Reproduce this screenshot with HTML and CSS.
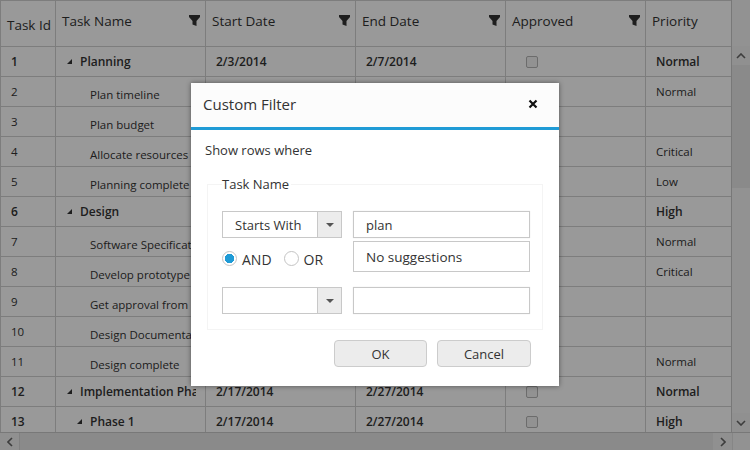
FILE: index.html
```html
<!DOCTYPE html>
<html lang="en">

<head>
    <meta charset="UTF-8">
    <title>Task Grid</title>
    <link rel="stylesheet" href="styles.css">
</head>

<body>
    <section class="grid">
        <div class="grid-main">
            <div class="grid-content">
                <table class="tasks">
                    <colgroup>
                        <col class="col-id">
                        <col class="col-wide">
                        <col class="col-wide">
                        <col class="col-wide">
                        <col class="col-approved">
                        <col class="col-priority">
                    </colgroup>
                    <thead>
                        <tr>
                            <th class="head-id">Task Id</th>
                            <th><div class="head-cell">Task Name<svg class="funnel" viewBox="0 0 11 11"><path d="M0 0H11V2L7.5 6V11L3.5 9.5V6L0 2Z"/></svg></div></th>
                            <th><div class="head-cell">Start Date<svg class="funnel" viewBox="0 0 11 11"><path d="M0 0H11V2L7.5 6V11L3.5 9.5V6L0 2Z"/></svg></div></th>
                            <th><div class="head-cell">End Date<svg class="funnel" viewBox="0 0 11 11"><path d="M0 0H11V2L7.5 6V11L3.5 9.5V6L0 2Z"/></svg></div></th>
                            <th><div class="head-cell">Approved<svg class="funnel" viewBox="0 0 11 11"><path d="M0 0H11V2L7.5 6V11L3.5 9.5V6L0 2Z"/></svg></div></th>
                            <th>Priority</th>
                        </tr>
                    </thead>
                    <tbody>
                        <tr class="parent"><td>1</td><td class="name"><div class="tree"><i class="toggle"></i><span>Planning</span></div></td><td>2/3/2014</td><td>2/7/2014</td><td><span class="check"></span></td><td>Normal</td></tr>
                        <tr><td>2</td><td class="name leaf">Plan timeline</td><td></td><td></td><td></td><td>Normal</td></tr>
                        <tr><td>3</td><td class="name leaf">Plan budget</td><td></td><td></td><td></td><td></td></tr>
                        <tr><td>4</td><td class="name leaf">Allocate resources</td><td></td><td></td><td></td><td>Critical</td></tr>
                        <tr><td>5</td><td class="name leaf">Planning complete</td><td></td><td></td><td></td><td>Low</td></tr>
                        <tr class="parent"><td>6</td><td class="name"><div class="tree"><i class="toggle"></i><span>Design</span></div></td><td></td><td></td><td></td><td>High</td></tr>
                        <tr><td>7</td><td class="name leaf">Software Specification</td><td></td><td></td><td></td><td>Normal</td></tr>
                        <tr><td>8</td><td class="name leaf">Develop prototype</td><td></td><td></td><td></td><td>Critical</td></tr>
                        <tr><td>9</td><td class="name leaf">Get approval from customer</td><td></td><td></td><td></td><td></td></tr>
                        <tr><td>10</td><td class="name leaf">Design Documentation</td><td></td><td></td><td></td><td></td></tr>
                        <tr><td>11</td><td class="name leaf">Design complete</td><td></td><td></td><td></td><td>Normal</td></tr>
                        <tr class="parent"><td>12</td><td class="name"><div class="tree"><i class="toggle"></i><span>Implementation Phase</span></div></td><td>2/17/2014</td><td>2/27/2014</td><td><span class="check"></span></td><td>Normal</td></tr>
                        <tr class="parent"><td>13</td><td class="name sub"><div class="tree"><i class="toggle"></i><span>Phase 1</span></div></td><td>2/17/2014</td><td>2/27/2014</td><td><span class="check"></span></td><td>High</td></tr>
                    </tbody>
                </table>
            </div>
            <div class="vscroll">
                <div class="vscroll-head"></div>
                <div class="sb-btn sb-v"><svg viewBox="0 0 10 6"><path d="M1 5L5 1L9 5"/></svg></div>
                <div class="vscroll-thumb"></div>
                <div class="vscroll-track"></div>
                <div class="sb-btn sb-v"><svg viewBox="0 0 10 6"><path d="M1 1L5 5L9 1"/></svg></div>
            </div>
        </div>
        <div class="hscroll">
            <div class="sb-btn sb-h"><svg viewBox="0 0 6 10"><path d="M5 1L1 5L5 9"/></svg></div>
            <div class="hscroll-thumb"></div>
            <div class="sb-btn sb-h"><svg viewBox="0 0 6 10"><path d="M1 1L5 5L1 9"/></svg></div>
            <div class="sb-corner"></div>
        </div>
    </section>

    <div class="overlay"></div>

    <div class="dialog">
        <div class="dialog-title">
            <span>Custom Filter</span>
            <svg class="close" viewBox="0 0 10 10"><path d="M1.5 1.5L8.5 8.5M8.5 1.5L1.5 8.5"/></svg>
        </div>
        <div class="dialog-body">
            <p class="show-rows">Show rows where</p>
            <fieldset class="filter-box">
                <legend>Task Name</legend>
                <div class="filter-grid">
                    <div class="left-col">
                        <div class="combo">
                            <span class="combo-text">Starts With</span>
                            <span class="combo-btn"><i class="caret"></i></span>
                        </div>
                        <div class="radios">
                            <span class="radio on"></span><span class="radio-label">AND</span>
                            <span class="radio"></span><span class="radio-label">OR</span>
                        </div>
                    </div>
                    <div class="right-col">
                        <div class="field">plan</div>
                        <div class="suggest">No suggestions</div>
                    </div>
                    <div class="combo">
                        <span class="combo-text"></span>
                        <span class="combo-btn"><i class="caret"></i></span>
                    </div>
                    <div class="field"></div>
                </div>
            </fieldset>
            <div class="actions">
                <button class="btn btn-ok">OK</button>
                <button class="btn btn-cancel">Cancel</button>
            </div>
        </div>
    </div>
</body>

</html>
```

FILE: styles.css
```css
* {
    box-sizing: border-box;
    margin: 0;
}

body {
    width: 750px;
    height: 450px;
    overflow: hidden;
    background-color: #fff;
    font-family: "Open Sans", "Liberation Sans", sans-serif;
    color: #333;
}

/* grid */
.grid {
    width: 750px;
    height: 450px;
    display: flex;
    flex-direction: column;
}

.grid-main {
    display: flex;
    height: 432px;
}

.grid-content {
    width: 732px;
    overflow: hidden;
    border-right: 1px solid #c8c8c8;
}

.tasks {
    table-layout: fixed;
    border-collapse: separate;
    border-spacing: 0;
    width: 731px;
    font-size: 11.5px;
}

.col-id {
    width: 56px;
}

.col-wide {
    width: 150px;
}

.col-approved {
    width: 140px;
}

.col-priority {
    width: 85px;
}

.tasks th {
    height: 47px;
    padding: 0 0 6px 6px;
    text-align: left;
    font-size: 13.5px;
    font-weight: 400;
    border-right: 1px solid #d0d0d0;
    border-top: 1px solid #d0d0d0;
    border-bottom: 1px solid #d0d0d0;
    white-space: nowrap;
}

.tasks th:last-child {
    border-right: none;
}

.tasks th.head-id {
    padding: 2px 0 0 6px;
    border-left: 1px solid #d0d0d0;
}

.head-cell {
    display: flex;
    justify-content: space-between;
    align-items: center;
    padding-right: 5px;
}

.funnel {
    width: 11px;
    height: 11px;
    fill: #333;
}

.tasks td {
    height: 30px;
    padding: 0 10px;
    border-right: 1px solid #d0d0d0;
    border-bottom: 1px solid #d0d0d0;
    white-space: nowrap;
    overflow: hidden;
}

.tasks td:first-child {
    border-left: 1px solid #d0d0d0;
}

.tasks td:last-child {
    border-right: none;
}

.parent td {
    font-size: 12px;
    font-weight: 600;
}

.tasks td.name {
    padding-left: 11px;
}

.tasks td.leaf {
    padding-left: 34px;
    padding-top: 5px;
}

.tasks td.sub {
    padding-left: 21px;
}

.tree {
    display: flex;
    align-items: center;
    width: 129px;
    overflow: hidden;
}

.toggle {
    flex: none;
    width: 0;
    height: 0;
    margin: -1px 8px 0 0;
    border-left: 5px solid transparent;
    border-bottom: 5px solid #333;
}

.check {
    display: block;
    width: 12px;
    height: 12px;
    margin-left: 10px;
    background-color: #f4f4f4;
    border: 1px solid #b5b5b5;
    border-radius: 2px;
}

/* scrollbars */
.vscroll {
    width: 18px;
    display: flex;
    flex-direction: column;
    background-color: #f3f3f3;
}

.vscroll-head {
    height: 46px;
}

.vscroll-thumb {
    height: 123px;
    background-color: #e6e6e6;
}

.vscroll-track {
    flex: 1;
}

.hscroll {
    display: flex;
    height: 18px;
    border-top: 1px solid #c8c8c8;
    background-color: #f3f3f3;
}

.hscroll-thumb {
    flex: 1;
    background-color: #e6e6e6;
    border-left: 1px solid #d8d8d8;
}

.sb-corner {
    width: 18px;
    background-color: #f3f3f3;
    border-left: 1px solid #e0e0e0;
}

.sb-btn {
    display: flex;
    align-items: center;
    justify-content: center;
    background-color: #f0f0f0;
}

.sb-v {
    height: 19px;
}

.sb-h {
    width: 19px;
}

.sb-btn svg {
    fill: none;
    stroke: #666;
    stroke-width: 1.6;
}

.sb-v svg {
    width: 10px;
    height: 6px;
}

.sb-h svg {
    width: 6px;
    height: 10px;
}

/* dialog */
.overlay {
    position: absolute;
    top: 0;
    left: 0;
    width: 750px;
    height: 450px;
    background-color: rgba(0, 0, 0, 0.4);
}

.dialog {
    position: absolute;
    top: 83px;
    left: 191px;
    width: 368px;
    height: 303px;
    background-color: #fff;
    box-shadow: 0 0 5px rgba(0, 0, 0, 0.45);
    font-size: 13px;
}

.dialog-title {
    display: flex;
    justify-content: space-between;
    align-items: center;
    height: 47px;
    padding: 0 21px 2px 12px;
    background-color: #fcfcfc;
    border-bottom: 3px solid #1f9bd6;
    font-size: 15px;
}

.close {
    width: 10px;
    height: 10px;
    fill: none;
    stroke: #111;
    stroke-width: 2.2;
}

.dialog-body {
    padding: 11px 28px 0 14px;
}

.show-rows {
    line-height: 18px;
}

.filter-box {
    width: 335px;
    height: 155px;
    margin: 16px 0 0 2px;
    padding: 0 12px 0 14px;
    border: 1px solid #f4f4f4;
}

.filter-box legend {
    padding: 0 2px 0 0;
    margin-left: 0;
    line-height: 18px;
}

.filter-grid {
    display: grid;
    grid-template-columns: 120px 177px;
    grid-template-rows: 61px 27px;
    column-gap: 11px;
    row-gap: 15px;
    margin-top: 18px;
}

.combo {
    display: flex;
    height: 27px;
    border: 1px solid #c8c8c8;
}

.combo-text {
    flex: 1;
    padding-left: 12px;
    line-height: 27px;
}

.combo-btn {
    display: flex;
    align-items: center;
    justify-content: center;
    width: 24px;
    background-color: #ececec;
    border-left: 1px solid #c8c8c8;
}

.caret {
    width: 0;
    height: 0;
    border-left: 4px solid transparent;
    border-right: 4px solid transparent;
    border-top: 4px solid #555;
}

.radios {
    display: flex;
    align-items: center;
    margin-top: 10px;
}

.radio {
    width: 15px;
    height: 15px;
    border: 1px solid #c4c4c4;
    border-radius: 50%;
    background-color: #fff;
}

.radio.on {
    border-color: #c4c4c4;
    background: radial-gradient(circle, #1f9bd6 0, #1f9bd6 4.5px, #fff 5px);
}

.radio-label {
    margin: 2px 12px 0 5px;
    font-size: 14px;
}

.field {
    height: 27px;
    padding-left: 12px;
    line-height: 27px;
    border: 1px solid #c8c8c8;
    box-shadow: 0 0 1px rgba(0, 0, 0, 0.12);
}

.suggest {
    height: 31px;
    margin-top: 3px;
    padding-left: 12px;
    line-height: 30px;
    font-size: 13.5px;
    border: 1px solid #c8c8c8;
}

.actions {
    display: flex;
    justify-content: flex-end;
    gap: 10px;
    margin-top: 10px;
}

.btn {
    height: 27px;
    background-color: #ececec;
    border: 1px solid #ccc;
    border-radius: 4px;
    font-family: inherit;
    font-size: 13px;
    color: #333;
}

.btn-ok {
    width: 93px;
}

.btn-cancel {
    width: 94px;
}
```
